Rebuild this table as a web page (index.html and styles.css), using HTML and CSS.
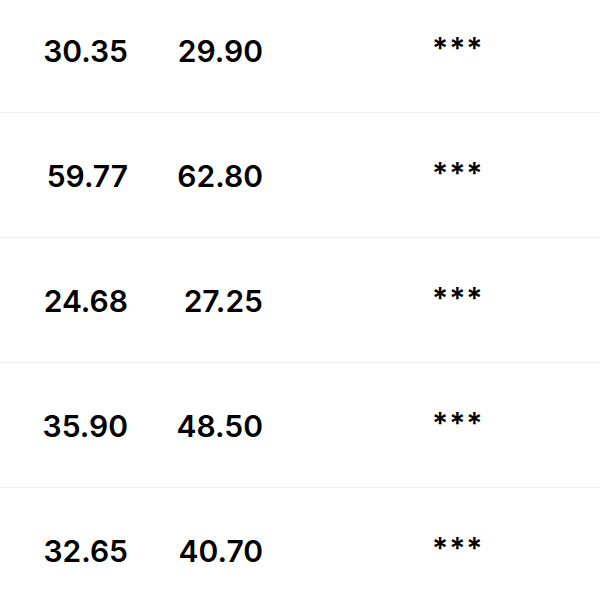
FILE: index.html
```html
<!DOCTYPE html>
<html>
<head>
<meta charset="utf-8">
<link rel="stylesheet" href="styles.css">
</head>
<body>
<div class="list">
  <div class="row"><span class="num a">30.35</span><span class="num b">29.90</span><span class="stars">***</span></div>
  <div class="row"><span class="num a">59.77</span><span class="num b">62.80</span><span class="stars">***</span></div>
  <div class="row"><span class="num a">24.68</span><span class="num b">27.25</span><span class="stars">***</span></div>
  <div class="row"><span class="num a">35.90</span><span class="num b">48.50</span><span class="stars">***</span></div>
  <div class="row"><span class="num a">32.65</span><span class="num b">40.70</span><span class="stars">***</span></div>
</div>
</body>
</html>
```
FILE: styles.css
```css
html, body {
  margin: 0;
  padding: 0;
  background: #ffffff;
}
body {
  font-family: Inter, "Liberation Sans", sans-serif;
  color: #000;
  overflow: hidden;
}
.list {
  margin-top: -12px;
}
.row {
  height: 124px;
  border-bottom: 1px solid #f0f0f0;
  display: grid;
  grid-template-columns: 128px 135px 169px 1fr;
  align-items: center;
}
.num {
  font-size: 30px;
  font-weight: 600;
  text-align: right;
  transform: translateY(1px);
}
.stars {
  grid-column: 4;
  font-size: 30px;
  font-weight: 600;
  letter-spacing: 1px;
  transform: translateY(-2px);
}
```
